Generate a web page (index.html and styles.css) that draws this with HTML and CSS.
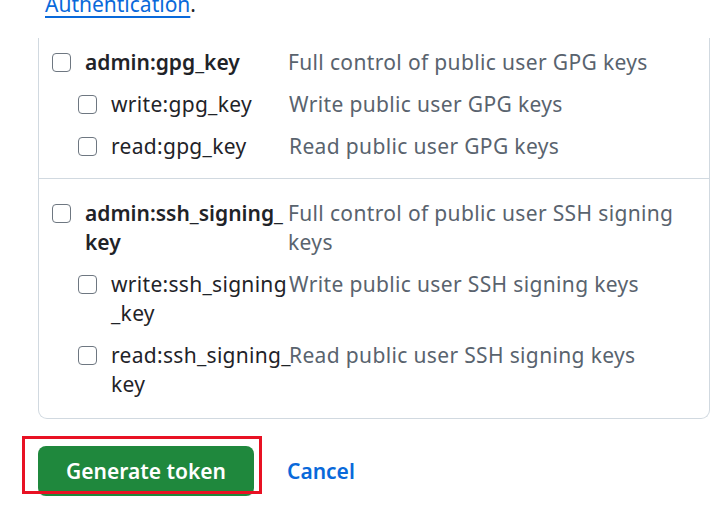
FILE: index.html
```html
<!DOCTYPE html>
<html lang="en">
<head>
    <meta charset="UTF-8">
    <meta name="viewport" content="width=device-width, initial-scale=1.0">
    <title>New personal access token</title>
    <link rel="stylesheet" href="styles.css">
</head>
<body>
    <div class="page">
        <p class="intro"><a href="#">Authentication</a>.</p>

        <div class="scopes">
            <div class="scope-group first">
                <label class="scope">
                    <input type="checkbox">
                    <span class="scope-name">admin:gpg_key</span>
                    <span class="scope-desc">Full control of public user GPG keys</span>
                </label>
                <label class="scope sub">
                    <input type="checkbox">
                    <span class="scope-name">write:gpg_key</span>
                    <span class="scope-desc">Write public user GPG keys</span>
                </label>
                <label class="scope sub">
                    <input type="checkbox">
                    <span class="scope-name">read:gpg_key</span>
                    <span class="scope-desc">Read public user GPG keys</span>
                </label>
            </div>

            <div class="scope-group">
                <label class="scope">
                    <input type="checkbox">
                    <span class="scope-name">admin:ssh_signing_<wbr>key</span>
                    <span class="scope-desc">Full control of public user SSH signing keys</span>
                </label>
                <label class="scope sub">
                    <input type="checkbox">
                    <span class="scope-name">write:ssh_signing<wbr>_key</span>
                    <span class="scope-desc">Write public user SSH signing keys</span>
                </label>
                <label class="scope sub">
                    <input type="checkbox">
                    <span class="scope-name">read:ssh_signing_<wbr>key</span>
                    <span class="scope-desc">Read public user SSH signing keys</span>
                </label>
            </div>
        </div>

        <div class="actions">
            <span class="highlight"></span>
            <button type="submit" class="btn-primary">Generate token</button>
            <a href="#" class="cancel">Cancel</a>
        </div>
    </div>
</body>
</html>
```

FILE: styles.css
```css
body {
    font-family: "Noto Sans", "Open Sans", sans-serif;
    font-size: 21px;
    line-height: 29px;
    letter-spacing: 0.35px;
    margin: 0;
    padding: 0;
    background-color: #ffffff;
    color: #1f2328;
    overflow: hidden;
}

.page {
    padding-left: 38px;
}

.intro {
    margin: -10px 0 0 0;
    padding-left: 7px;
    letter-spacing: 0;
}

.intro a {
    color: #0969da;
    text-decoration: underline;
    text-underline-offset: 4px;
}

.scopes {
    width: 672px;
    box-sizing: border-box;
    margin-top: 19px;
    border: 1px solid #d1d9e0;
    border-top: none;
    border-radius: 0 0 9px 9px;
}

.scope-group {
    display: flex;
    flex-direction: column;
    gap: 13px;
    padding: 20px 12px 19px 13px;
}

.scope-group.first {
    padding-top: 10px;
    padding-bottom: 17px;
    border-bottom: 1px solid #d1d9e0;
}

.scope {
    display: flex;
    align-items: flex-start;
}

.scope input[type="checkbox"] {
    appearance: none;
    -webkit-appearance: none;
    flex: none;
    width: 19px;
    height: 19px;
    margin: 5px 14px 0 0;
    border: 1.5px solid #6e7781;
    border-radius: 4px;
    background-color: #ffffff;
    box-sizing: border-box;
}

.scope.sub {
    padding-left: 26px;
}

.scope-name {
    flex: none;
    width: 203px;
    font-weight: 600;
    letter-spacing: 0;
}

.scope.sub .scope-name {
    width: 178px;
    font-weight: 400;
    letter-spacing: 0.3px;
}

.scope-desc {
    flex: 1;
    color: #59636e;
    padding-right: 20px;
}

.actions {
    position: relative;
    display: flex;
    align-items: center;
    margin-top: 27px;
}

.btn-primary {
    font-family: inherit;
    font-size: 21px;
    font-weight: 600;
    width: 216px;
    height: 50px;
    border: none;
    border-radius: 8px;
    background-color: #1f883d;
    color: #ffffff;
    box-shadow: 0 1px 0 rgba(31, 35, 40, 0.1);
    cursor: pointer;
}

.cancel {
    margin-left: 33px;
    color: #0969da;
    font-weight: 600;
    letter-spacing: 0;
    text-decoration: none;
}

/* annotation box drawn over the button */
.highlight {
    position: absolute;
    left: -16px;
    top: -10px;
    width: 240px;
    height: 58px;
    border: 3px solid #e81123;
    box-sizing: border-box;
    pointer-events: none;
}
```
